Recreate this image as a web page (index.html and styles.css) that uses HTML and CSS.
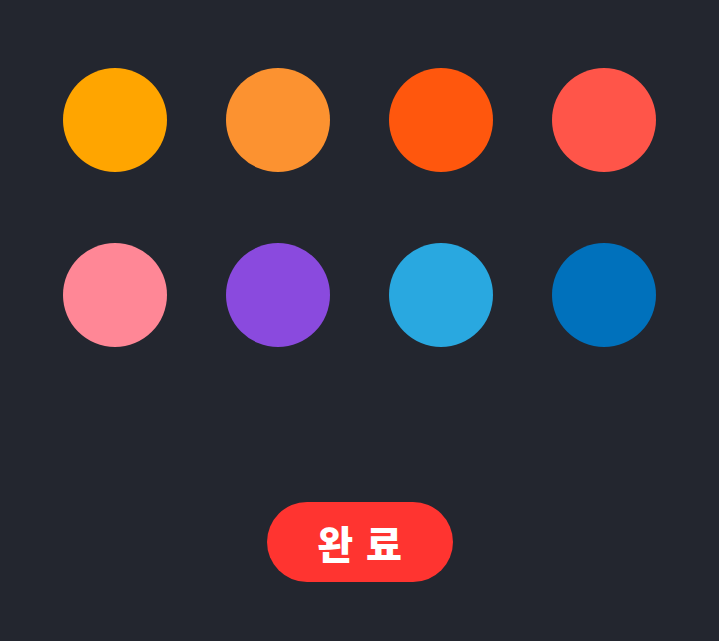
FILE: index.html
```html
<!DOCTYPE html>
<html lang="ko">
<head>
<meta charset="utf-8">
<link rel="stylesheet" href="styles.css">
</head>
<body>
<main class="screen">
  <div class="palette">
    <span class="dot c1"></span>
    <span class="dot c2"></span>
    <span class="dot c3"></span>
    <span class="dot c4"></span>
    <span class="dot c5"></span>
    <span class="dot c6"></span>
    <span class="dot c7"></span>
    <span class="dot c8"></span>
  </div>
  <button class="done">완 료</button>
</main>
</body>
</html>
```
FILE: styles.css
```css
html, body {
  margin: 0;
  padding: 0;
  background: #23262f;
}
.screen {
  width: 719px;
  height: 641px;
  display: flex;
  flex-direction: column;
  align-items: center;
  padding-top: 68px;
  box-sizing: border-box;
}
.palette {
  display: grid;
  grid-template-columns: repeat(4, 104px);
  grid-auto-rows: 104px;
  column-gap: 59px;
  row-gap: 71px;
}
.dot {
  display: block;
  width: 104px;
  height: 104px;
  border-radius: 50%;
}
.c1 { background: #ffa500; }
.c2 { background: #fc9230; }
.c3 { background: #ff570d; }
.c4 { background: #ff5549; }
.c5 { background: #ff8796; }
.c6 { background: #8a4ade; }
.c7 { background: #29a8e0; }
.c8 { background: #0071bc; }
.done {
  margin-top: 155px;
  width: 186px;
  height: 80px;
  border: none;
  border-radius: 40px;
  background: #ff3430;
  color: #ffffff;
  font-family: "Noto Sans CJK KR", "Noto Sans", sans-serif;
  font-weight: 900;
  font-size: 39px;
  line-height: 80px;
  letter-spacing: 1px;
  padding: 0 0 0 1px;
}
```
